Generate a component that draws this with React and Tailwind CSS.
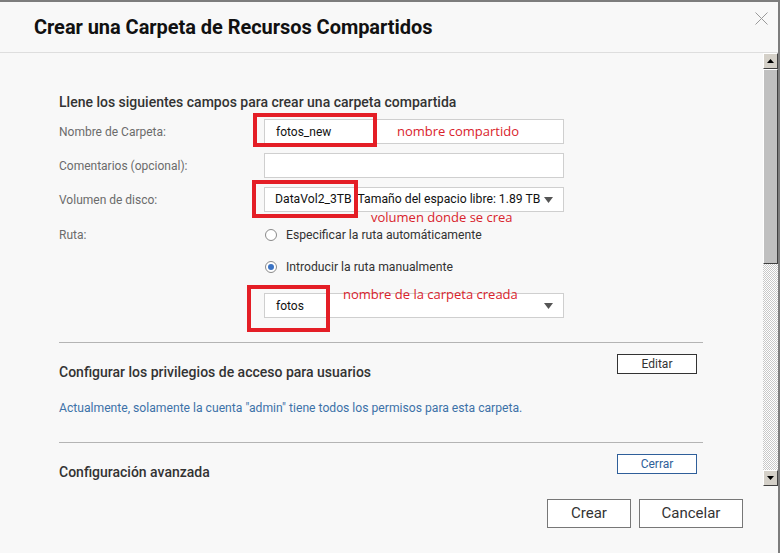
import React from 'react';

const Label = ({ children }) => (
  <div className="w-[205px] shrink-0 text-[12px] text-[#6b6b6b]">{children}</div>
);

const Arrow = () => (
  <svg width="9" height="6" viewBox="0 0 9 6" className="absolute right-[10px] top-1/2 -translate-y-1/2">
    <path d="M0 0 H9 L4.5 6 Z" fill="#555" />
  </svg>
);

const Radio = ({ checked, children }) => (
  <div className="flex items-center h-[18px]">
    <span className="ml-[1px] w-[12px] h-[12px] rounded-full border border-[#8a8a8a] bg-white flex items-center justify-center">
      {checked && <span className="w-[6px] h-[6px] rounded-full bg-[#3b73c4]" />}
    </span>
    <span className="ml-[9px] text-[12.2px] text-[#333]">{children}</span>
  </div>
);

const Scrollbar = () => (
  <div className="w-[15px] h-full flex flex-col bg-[#f0f0f0]">
    <div className="h-[16px] bg-[#d4d0c8] border-t border-l border-white border-r border-b border-r-[#404040] border-b-[#404040] flex items-center justify-center">
      <svg width="7" height="4" viewBox="0 0 7 4"><path d="M0 4 L3.5 0 L7 4 Z" fill="#000" /></svg>
    </div>
    <div className="h-[195px] bg-[#c0c0c0] border-t border-l border-white border-r border-b border-r-[#404040] border-b-[#404040]" />
    <div className="flex-1 bg-[repeating-conic-gradient(#c8c8c8_0_25%,#ffffff_0_50%)] bg-size-[2px_2px]" />
    <div className="h-[16px] bg-[#d4d0c8] border-t border-l border-white border-r border-b border-r-[#404040] border-b-[#404040] flex items-center justify-center">
      <svg width="7" height="4" viewBox="0 0 7 4"><path d="M0 0 L7 0 L3.5 4 Z" fill="#000" /></svg>
    </div>
  </div>
);

export default function App() {
  return (
    <div className="relative w-[780px] h-[553px] bg-[#f8f8f8] border-t-2 border-r-2 border-[#7d7d7d] font-['Roboto',sans-serif] overflow-hidden">
      {/* header */}
      <div className="h-[51px] border-b border-[#dedede] flex items-center pl-[34px]">
        <h1 className="text-[20px] font-bold text-[#111] tracking-[-0.05px]">Crear una Carpeta de Recursos Compartidos</h1>
        <svg width="13" height="13" viewBox="0 0 13 13" className="absolute right-[10px] top-[10px]">
          <path d="M0.5 0.5 L12.5 12.5 M12.5 0.5 L0.5 12.5" stroke="#9a9a9a" strokeWidth="1" />
        </svg>
      </div>

      {/* body */}
      <div className="flex h-[433px]">
        <div className="flex-1 overflow-hidden pl-[59px] pr-[60px] pt-[39px]">
          <h2 className="text-[14px] font-medium text-[#333] leading-[20px]">Llene los siguientes campos para crear una carpeta compartida</h2>

          <div className="mt-[7px] flex flex-col gap-[9px]">
            <div className="flex items-center">
              <Label>Nombre de Carpeta:</Label>
              <div className="w-[300px] h-[25px] border border-[#cfcfcf] bg-white pl-[11px] flex items-center text-[12px] text-[#111]">fotos_new</div>
            </div>
            <div className="flex items-center">
              <Label>Comentarios (opcional):</Label>
              <div className="w-[300px] h-[25px] border border-[#cfcfcf] bg-white" />
            </div>
            <div className="flex items-center">
              <Label>Volumen de disco:</Label>
              <div className="relative w-[300px] h-[25px] border border-[#cfcfcf] bg-white pl-[10px] flex items-center text-[12.2px] text-[#111]">
                DataVol2_3TB&nbsp; Tamaño del espacio libre: 1.89 TB
                <Arrow />
              </div>
            </div>
          </div>

          <div className="flex mt-[14px]">
            <div className="w-[205px] shrink-0 text-[12px] text-[#6b6b6b] leading-[18px]">Ruta:</div>
            <div className="flex flex-col gap-[14px]">
              <Radio>Especificar la ruta automáticamente</Radio>
              <Radio checked>Introducir la ruta manualmente</Radio>
            </div>
          </div>

          <div className="flex mt-[17px]">
            <div className="w-[205px] shrink-0" />
            <div className="relative w-[300px] h-[25px] border border-[#cfcfcf] bg-white pl-[11px] flex items-center text-[12px] text-[#111]">
              fotos
              <Arrow />
            </div>
          </div>

          <div className="mt-[24px] border-t border-[#b4b4b4]" />

          <div className="flex items-start justify-between pr-[6px] pt-[11px]">
            <h2 className="text-[14px] font-medium text-[#333] leading-[20px] pt-[8px]">Configurar los privilegios de acceso para usuarios</h2>
            <button className="w-[80px] h-[20px] border border-[#333] bg-white text-[12px] text-[#333] leading-none">Editar</button>
          </div>
          <p className="mt-[18px] text-[12.15px] leading-[16px] text-[#3d72a8]">Actualmente, solamente la cuenta "admin" tiene todos los permisos para esta carpeta.</p>

          <div className="mt-[26px] border-t border-[#b4b4b4]" />

          <div className="flex items-start justify-between pr-[6px] pt-[11px]">
            <h2 className="text-[14px] font-medium text-[#333] leading-[20px] pt-[8px]">Configuración avanzada</h2>
            <button className="w-[80px] h-[20px] border border-[#2f5f9a] bg-white text-[12px] text-[#2f5f9a] leading-none">Cerrar</button>
          </div>
        </div>
        <Scrollbar />
      </div>

      {/* footer */}
      <div className="flex justify-end gap-[8px] pr-[35px] pt-[13px]">
        <button className="w-[84px] h-[29px] border border-[#777] bg-white text-[15px] text-[#333]">Crear</button>
        <button className="w-[104px] h-[29px] border border-[#777] bg-white text-[15px] text-[#333]">Cancelar</button>
      </div>

      {/* annotations */}
      <div className="absolute left-[253px] top-[111px] w-[124px] h-[34px] border-[4px] border-[#e41e26]" />
      <div className="absolute left-[252px] top-[178px] w-[106px] h-[38px] border-[4px] border-[#e41e26]" />
      <div className="absolute left-[247px] top-[283px] w-[83px] h-[47px] border-[4px] border-[#e41e26]" />
      <div className="absolute left-[397px] top-[120px] text-[13px] text-[#d9232c] font-['Open_Sans',sans-serif]">nombre compartido</div>
      <div className="absolute left-[371px] top-[206px] text-[13px] text-[#d9232c] font-['Open_Sans',sans-serif]">volumen donde se crea</div>
      <div className="absolute left-[343px] top-[283px] text-[13px] text-[#d9232c] font-['Open_Sans',sans-serif]">nombre de la carpeta creada</div>
    </div>
  );
}
